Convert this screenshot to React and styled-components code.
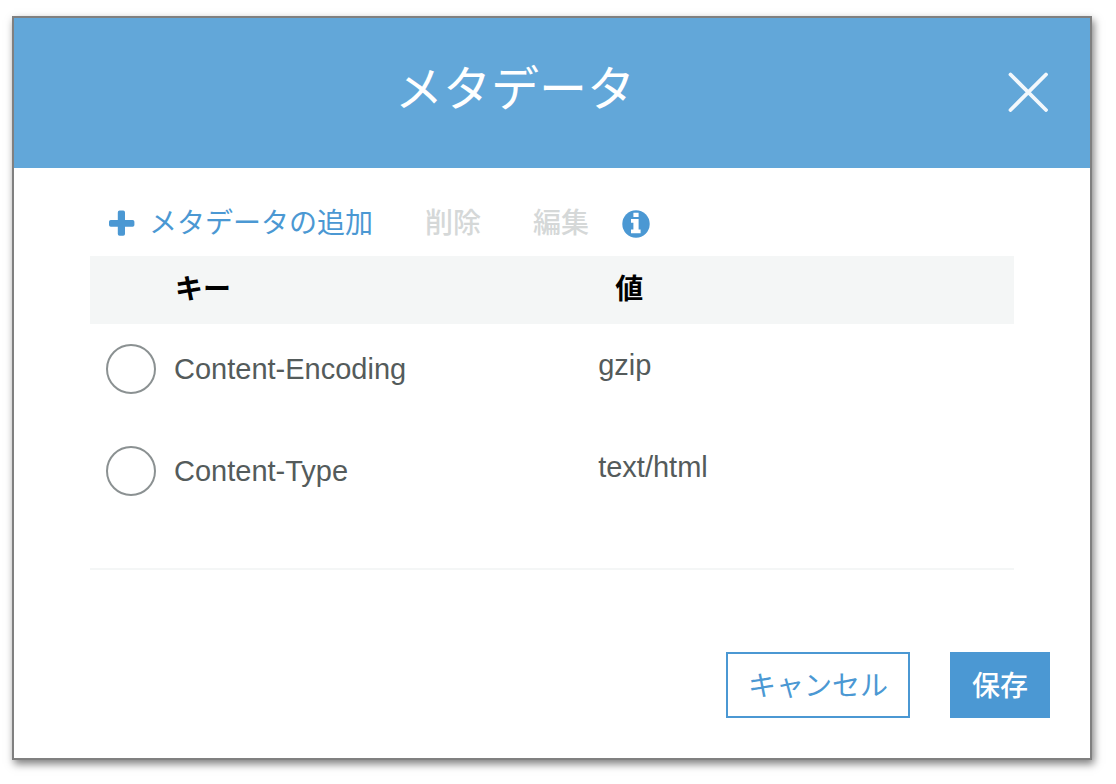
import React, { useState } from "react";
import styled, { createGlobalStyle } from "styled-components";

const GlobalStyle = createGlobalStyle`
  * { box-sizing: border-box; }
  body {
    margin: 0;
    background: #fff;
    font-family: "Liberation Sans", "Noto Sans CJK JP", sans-serif;
    font-size: 28px;
    line-height: 40px;
    color: #545b5b;
  }
  button { font: inherit; cursor: pointer; }
`;

const Dialog = styled.section`
  margin: 16px 24px 24px 12px;
  border: 2px solid #808080;
  background: #fff;
  box-shadow: 2px 4px 8px rgba(0, 0, 0, 0.5);
`;

const Header = styled.header`
  display: flex;
  align-items: center;
  padding: 36px 42px 38px 8px;
  background: #62a7d9;
  color: #fff;
`;

const Title = styled.h1`
  flex: 1;
  margin: 0;
  padding-bottom: 4px;
  font-size: 48px;
  font-weight: 400;
  line-height: 72px;
  text-align: center;
`;

const CloseButton = styled.button`
  display: flex;
  padding: 0;
  border: 0;
  background: none;
  color: inherit;
`;

const Body = styled.div`
  padding: 0 76px;
`;

const Toolbar = styled.div`
  display: flex;
  align-items: center;
  height: 88px;
  padding: 24px 18px 0;
`;

const ToolButton = styled.button`
  display: flex;
  align-items: center;
  gap: 13px;
  margin-right: 52px;
  padding: 0;
  border: 0;
  background: none;
  color: #4b98d3;

  &:disabled {
    color: #d5d8d8;
    font-weight: 500;
    cursor: default;
  }
`;

const InfoButton = styled(ToolButton)`
  margin: 0 0 0 -19px;
`;

const Table = styled.table`
  width: 100%;
  border-collapse: collapse;
  table-layout: fixed;
`;

const HeadCell = styled.th`
  width: ${(p) => p.$width};
  height: 68px;
  padding: 0 0 0 ${(p) => p.$indent};
  background: #f4f6f6;
  color: #000;
  font-weight: 700;
  text-align: left;
`;

const Cell = styled.td`
  height: 102px;
  padding: ${(p) => p.$top} 0 0 ${(p) => p.$indent};
  vertical-align: top;
  font-size: 29px;
  line-height: 50px;
`;

const Choice = styled.label`
  display: flex;
  align-items: center;
  gap: 18px;
  cursor: pointer;
`;

const Radio = styled.input`
  appearance: none;
  width: 50px;
  height: 50px;
  margin: 0;
  border: 2px solid #8b9192;
  border-radius: 50%;
  background: #fff;

  &:checked { box-shadow: inset 0 0 0 10px #fff, inset 0 0 0 25px #4b98d3; }
`;

const Footer = styled.footer`
  display: flex;
  justify-content: flex-end;
  gap: 40px;
  padding: 82px 40px 40px;
`;

const Rule = styled.hr`
  margin: 40px 0 0;
  border: 0;
  border-top: 2px solid #f4f6f6;
`;

const ActionButton = styled.button`
  height: 66px;
  padding: 3px 20px 0;
  border: 2px solid #4b98d3;
  background: ${(p) => (p.$primary ? "#4b98d3" : "#fff")};
  color: ${(p) => (p.$primary ? "#fff" : "#4b98d3")};
  && { font-weight: ${(p) => (p.$primary ? 500 : 400)}; }
`;

const CloseIcon = () => (
  <svg width="40" height="40" viewBox="0 0 40 40" fill="none" aria-hidden="true">
    <path d="M2.500 2.500L38 38M38 2.500L2.500 38" stroke="currentColor" strokeOpacity="0.92" strokeWidth="3.8" strokeLinecap="round" />
  </svg>
);

const PlusIcon = () => (
  <svg width="28" height="28" viewBox="0 0 28 28" aria-hidden="true">
    <path
      fill="currentColor"
      d="M11.6 .6h3.600a1.8 1.8 0 0 1 1.8 1.8v7.600h7.600a1.8 1.8 0 0 1 1.8 1.8v3.200a1.8 1.8 0 0 1-1.8 1.8H17v7.200a1.8 1.8 0 0 1-1.8 1.8h-3.600a1.8 1.8 0 0 1-1.8-1.8v-7.200H2.800a1.8 1.8 0 0 1-1.8-1.8v-3.200a1.8 1.8 0 0 1 1.8-1.8h7V2.400A1.8 1.8 0 0 1 11.6 .6z"
    />
  </svg>
);

const InfoIcon = () => (
  <svg width="28" height="28" viewBox="0 0 28 28" aria-hidden="true">
    <circle cx="14" cy="14" r="13.7" fill="currentColor" />
    <path fill="#fff" d="M11.4 2.700h5.200v4.200h-5.200zM9 9h7.600v10.400h2v3.800H9v-3.800h2.400v-6.600H9z" />
  </svg>
);

const entries = [
  { key: "Content-Encoding", value: "gzip" },
  { key: "Content-Type", value: "text/html" },
];

export default function App() {
  const [selected, setSelected] = useState(null);

  return (
    <>
      <GlobalStyle />
      <Dialog role="dialog" aria-labelledby="dialog-title">
        <Header>
          <Title id="dialog-title">メタデータ</Title>
          <CloseButton type="button" aria-label="閉じる">
            <CloseIcon />
          </CloseButton>
        </Header>
        <Body>
          <Toolbar>
            <ToolButton type="button">
              <PlusIcon />
              メタデータの追加
            </ToolButton>
            <ToolButton type="button" disabled={selected === null}>削除</ToolButton>
            <ToolButton type="button" disabled={selected === null}>編集</ToolButton>
            <InfoButton type="button" aria-label="情報">
              <InfoIcon />
            </InfoButton>
          </Toolbar>
          <Table>
            <thead>
              <tr>
                <HeadCell $width="55%" $indent="85px">キー</HeadCell>
                <HeadCell $indent="17px">値</HeadCell>
              </tr>
            </thead>
            <tbody>
              {entries.map((entry) => (
                <tr key={entry.key}>
                  <Cell $top="20px" $indent="16px">
                    <Choice>
                      <Radio
                        type="radio"
                        name="metadata"
                        checked={selected === entry.key}
                        onChange={() => setSelected(entry.key)}
                      />
                      {entry.key}
                    </Choice>
                  </Cell>
                  <Cell $top="16px" $indent="0">{entry.value}</Cell>
                </tr>
              ))}
            </tbody>
          </Table>
          <Rule />
        </Body>
        <Footer>
          <ActionButton type="button">キャンセル</ActionButton>
          <ActionButton type="button" $primary>保存</ActionButton>
        </Footer>
      </Dialog>
    </>
  );
}
